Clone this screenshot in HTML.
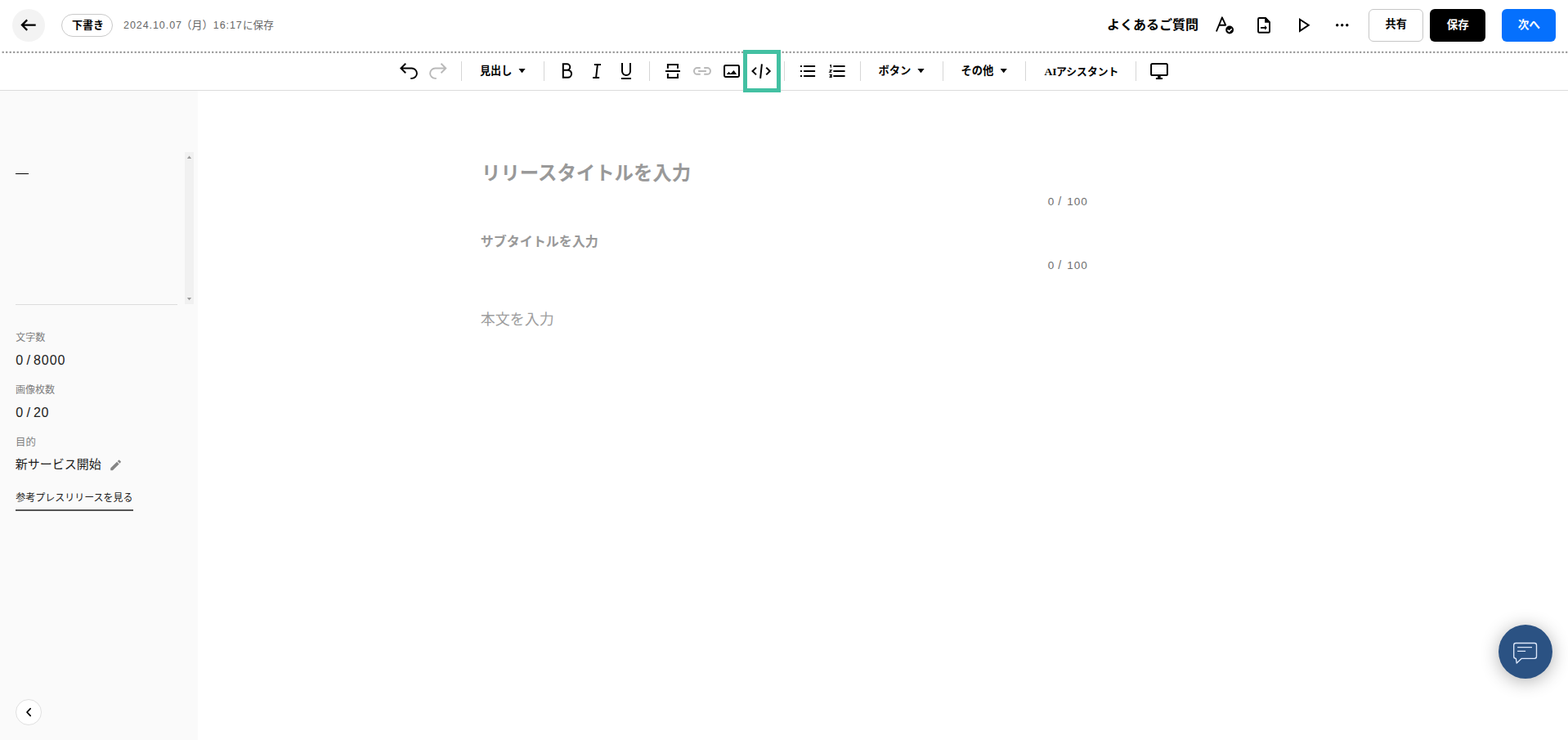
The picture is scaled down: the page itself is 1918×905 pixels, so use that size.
<!DOCTYPE html>
<html lang="ja">
<head>
<meta charset="utf-8">
<title>プレスリリースエディター</title>
<style>
*{box-sizing:border-box;margin:0;padding:0}
html,body{width:1918px;height:905px;overflow:hidden;background:#fff}
body{position:relative;font-family:"Liberation Sans",sans-serif;font-size:13px;color:#000}
.abs,.tx,.ico{position:absolute}
.tx{display:block;line-height:0}
.tx svg,.ico svg{display:block;overflow:visible}
.tx text{font-family:"Liberation Sans","Noto Sans CJK JP",sans-serif}
.ico{left:0;top:0;pointer-events:none}

/* header */
#header{position:absolute;left:0;top:0;width:1918px;height:63px;background:#fff}
.back{position:absolute;left:15px;top:11px;width:40px;height:40px;border-radius:50%;background:#f3f3f3}
.pill{position:absolute;left:75px;top:17px;width:63px;height:28px;border:1px solid #c9c9c9;border-radius:14px;background:#fff}
.btn{position:absolute;top:11px;height:40px;border-radius:6px;border:0;padding:0;margin:0;display:block;font:inherit}
.btn.share{left:1674px;width:67px;background:#fff;border:1px solid #c6c6c6}
.btn.save{left:1749px;width:68px;background:#000}
.btn.next{left:1837px;width:66px;background:#0570fd}
#dots{position:absolute;left:0;top:62px;width:1918px;height:4px}
#dots svg{display:block}

/* toolbar */
#toolbar{position:absolute;left:0;top:65px;width:1918px;height:46px;background:#fff;border-bottom:1px solid #dcdcdc}
.sep{position:absolute;top:10px;width:1px;height:24px;background:#d6d6d6}
#hl{position:absolute;left:909px;top:61px;width:46px;height:52px;border:5px solid #43c0a2;z-index:5}

/* sidebar */
#sidebar{position:absolute;left:0;top:111px;width:242px;height:794px;background:#fafafa}
.sb-track{position:absolute;left:226px;top:75px;width:11px;height:186px;background:#f1f1f1}
.sb-line{position:absolute;left:19px;top:261px;width:198px;height:1px;background:#dcdcdc}
.dash{position:absolute;left:19px;top:101px;width:16px;height:1px;background:#000}
.uline{position:absolute;left:19px;top:512px;width:144px;height:2px;background:#555}
.collapse{padding:0;display:block;position:absolute;left:19px;top:744px;width:32px;height:32px;border-radius:50%;background:#fff;border:1px solid #e0e0e0}

/* main */
#main{position:absolute;left:242px;top:111px;width:1676px;height:794px;background:#fff}
#fab{position:absolute;left:1833px;top:764px;width:66px;height:66px;border-radius:50%;background:#2b5283;box-shadow:0 3px 22px rgba(0,0,0,.31);z-index:6}
</style>
</head>
<body>

<header id="header">
  <a class="back" role="button" aria-label="戻る"></a>
  <span class="pill"></span>
  <span class="tx " style="left:87px;top:22px;width:41px;height:17px"><svg width="41" height="17" viewBox="0 0 41 17"><text x="1" y="13" font-size="13" font-weight="700" fill="#000">下書き</text></svg></span>
  <span class="tx " style="left:150px;top:24px;width:74px;height:13px"><svg width="74" height="13" viewBox="0 0 74 13"><text x="1" y="10.7" font-size="12.5" fill="#666" textLength="71" lengthAdjust="spacing">2024.10.07</text></svg></span><span class="tx " style="left:228px;top:22px;width:26px;height:17px"><svg width="26" height="17" viewBox="0 0 26 17"><text x="-6.5" y="12.9" font-size="13" fill="#666">（月）</text></svg></span><span class="tx " style="left:260px;top:24px;width:38px;height:13px"><svg width="38" height="13" viewBox="0 0 38 13"><text x="0.8" y="10.7" font-size="12.5" fill="#666" textLength="35" lengthAdjust="spacing">16:17</text></svg></span><span class="tx " style="left:297px;top:23px;width:39px;height:16px"><svg width="39" height="16" viewBox="0 0 39 16"><text x="0" y="12.1" font-size="12.6" fill="#666">に保存</text></svg></span>
  <span class="tx " style="left:1354px;top:21px;width:114px;height:19px"><svg width="114" height="19" viewBox="0 0 114 19"><text x="0" y="14.5" font-size="16" font-weight="700" fill="#000">よくあるご質問</text></svg></span>
  <button type="button" class="btn share" aria-label="共有"></button>
  <button type="button" class="btn save" aria-label="保存"></button>
  <button type="button" class="btn next" aria-label="次へ"></button>
  <span class="tx " style="left:1694px;top:22px;width:29px;height:16px"><svg width="29" height="16" viewBox="0 0 29 16"><text x="0.5" y="11.9" font-size="13.2" font-weight="700" fill="#000">共有</text></svg></span>
  <span class="tx " style="left:1768px;top:23px;width:31px;height:16px"><svg width="31" height="16" viewBox="0 0 31 16"><text x="1.7" y="11.9" font-size="13.5" font-weight="700" fill="#fff">保存</text></svg></span>
  <span class="tx " style="left:1856px;top:22px;width:30px;height:17px"><svg width="30" height="17" viewBox="0 0 30 17"><text x="0.7" y="12.9" font-size="13.6" font-weight="700" fill="#fff">次へ</text></svg></span>
  <div class="ico"><svg width="1918" height="63" viewBox="0 0 1918 63" fill="none" stroke="#000" stroke-width="2">
    <!-- back arrow -->
    <path d="M33.2 24.4 L26.9 30.6 L33.2 36.9 M26.9 30.6 H43.7" stroke-width="2.2"/>
    <!-- spell check A -->
    <path d="M1487.9 38.5 L1494.9 21.3 L1499.2 30.7 H1491.1" stroke-width="1.9" stroke-linejoin="round"/>
    <circle cx="1504.1" cy="36.5" r="4.9" fill="#000" stroke="none"/>
    <path d="M1501.5 36.5 L1503.5 38.4 L1506.8 35.2" stroke="#fff" stroke-width="1.5"/>
    <!-- file export -->
    <path d="M1548 22.05 H1540.3 a1.25 1.25 0 0 0 -1.25 1.25 V38.5 a1.25 1.25 0 0 0 1.25 1.25 H1551.75 a1.25 1.25 0 0 0 1.25 -1.25 V27.4 Z" stroke-width="1.9" stroke-linejoin="round"/>
    <path d="M1547.1 21.3 H1548.6 L1553.9 27 V27.8 H1547.1 Z" fill="#000" stroke="none"/>
    <path d="M1542.05 33.95 H1548" stroke-width="1.9"/>
    <path d="M1547.2 31.1 L1549.9 33.95 L1547.2 36.8 Z" fill="#000" stroke="none"/>
    <!-- play -->
    <path d="M1590 23.75 L1600.7 30.75 L1590 37.8 Z"/>
    <!-- dots -->
    <g fill="#000" stroke="none"><circle cx="1635.7" cy="30.7" r="1.7"/><circle cx="1641.7" cy="30.7" r="1.7"/><circle cx="1647.8" cy="30.7" r="1.7"/></g>
  </svg></div>
</header>

<div id="dots"><svg width="1918" height="4" viewBox="0 0 1918 4"><line x1="2.6" y1="1.95" x2="1918" y2="1.95" stroke="#9b9b9b" stroke-width="2.2" stroke-dasharray="2.2 2.3"/></svg></div>
<div id="hl"></div>

<nav id="toolbar">
  <div class="sep" style="left:564px"></div>
  <div class="sep" style="left:665px"></div>
  <div class="sep" style="left:794px"></div>
  <div class="sep" style="left:959px"></div>
  <div class="sep" style="left:1052px"></div>
  <div class="sep" style="left:1153px"></div>
  <div class="sep" style="left:1254px"></div>
  <div class="sep" style="left:1389px"></div>
  <span class="tx " style="left:586px;top:13px;width:42px;height:17px"><svg width="42" height="17" viewBox="0 0 42 17"><text x="1" y="12.9" font-size="13.1" font-weight="700" fill="#000">見出し</text></svg></span>
  <span class="tx " style="left:1074px;top:13px;width:42px;height:17px"><svg width="42" height="17" viewBox="0 0 42 17"><text x="0.5" y="13.3" font-size="13.3" font-weight="700" fill="#000">ボタン</text></svg></span>
  <span class="tx " style="left:1175px;top:13px;width:43px;height:17px"><svg width="43" height="17" viewBox="0 0 43 17"><text x="0.5" y="13" font-size="13.3" font-weight="700" fill="#000">その他</text></svg></span>
  <span class="tx " style="left:1276px;top:16px;width:19px;height:13px"><svg width="19" height="13" viewBox="0 0 19 13"><text x="1.4" y="10.7" font-size="13.5" font-weight="700" fill="#000" style="font-family:'Liberation Serif','Noto Serif CJK SC',serif" textLength="15" lengthAdjust="spacing">AI</text></svg></span><span class="tx " style="left:1292px;top:14px;width:77px;height:17px"><svg width="77" height="17" viewBox="0 0 77 17"><text x="0" y="13.3" font-size="12.8" font-weight="700" fill="#000">アシスタント</text></svg></span>
  <div class="ico"><svg width="1918" height="46" viewBox="0 65 1918 46" fill="none" stroke="#000" stroke-width="2">
    <!-- undo -->
    <path d="M496.2 77.8 L490.4 83.5 L496.2 89.2 M490.4 83.5 H503.75 A6.17 6.17 0 0 1 503.75 95.85 H502.2" stroke-width="1.9"/>
    <!-- redo -->
    <path d="M539.5 77.8 L545.3 83.5 L539.5 89.2 M545.3 83.5 H532.3 A6.17 6.17 0 0 0 532.3 95.85 H533.8" stroke="#b9b9b9" stroke-width="1.9"/>
    <!-- carets -->
    <g fill="#000" stroke="none">
      <path d="M634.5 84.1 H642.6 L638.55 89.3 Z"/>
      <path d="M1122.4 84.1 H1130.6 L1126.5 89.3 Z"/>
      <path d="M1223.6 84.1 H1231.8 L1227.7 89.3 Z"/>
    </g>
    <!-- B -->
    <path d="M688.8 78.3 V94.8 H694.5 A4.575 4.575 0 0 0 694.5 85.65 H688.8 M693.6 85.65 A3.675 3.675 0 0 0 693.6 78.3 H688.8 V79"/>
    <!-- I -->
    <path d="M726.9 79 H735 M725.1 94.9 H733.1 M730.9 79 L729.1 94.9"/>
    <!-- U -->
    <path d="M761 77 V86.9 A5 5 0 0 0 771 86.9 V77 M760 95.9 H772"/>
    <!-- page break -->
    <path d="M816.9 83.8 V78.9 H829 V83.8 M814 86.95 H832 M816.9 90.1 V94.9 H829 V90.1"/>
    <!-- link -->
    <path d="M856.75 83.1 H852.85 a3.85 3.85 0 0 0 0 7.7 H856.75 M861.2 83.1 H865.1 a3.85 3.85 0 0 1 0 7.7 H861.2 M854.15 86.95 H863.9" stroke="#b9b9b9"/>
    <!-- image -->
    <rect x="886.05" y="80.1" width="17.95" height="13.8" rx="1.4"/>
    <path d="M888.8 90.9 L891.4 87.7 L893.8 89.9 L897.6 85.9 L901.1 90.9 Z" fill="#000" stroke="none"/>
    <!-- code -->
    <path d="M925 82.6 L920.5 87 L925 91.4 M931.9 78.3 L930.1 95.8 M937.3 82.6 L941.7 87 L937.3 91.4"/>
    <!-- bullets -->
    <path d="M983.1 81 H997.1 M983.1 87 H997.1 M983.1 93 H997.1 M979 81 H981 M979 87 H981 M979 93 H981"/>
    <!-- numbered -->
    <path d="M1020.1 81 H1032.8 M1020.1 87 H1032.8 M1020.1 93 H1032.8" stroke-linecap="round"/>
    <g stroke-width="1.15"><path d="M1015 80.3 L1016.4 79.6 V82.7"/><path d="M1014.6 85.7 H1017.1 L1014.8 88.2 H1017.4"/><path d="M1014.6 91.4 H1017.1 L1015.9 92.8 H1017.1 V94.4 H1014.5"/></g>
    <!-- monitor -->
    <rect x="1408.1" y="77.95" width="19.8" height="14.05" rx="1.6"/>
    <path d="M1417.9 92.8 V95.3" stroke-width="3.6"/><path d="M1413.9 96.05 H1422"/>
  </svg></div>
</nav>

<aside id="sidebar">
  <div class="dash"></div>
  <div class="sb-track"></div>
  <div class="sb-line"></div>
  <span class="tx " style="left:18px;top:294px;width:39px;height:15px"><svg width="39" height="15" viewBox="0 0 39 15"><text x="1.3" y="11.85" font-size="12" fill="#7f7f7f">文字数</text></svg></span>
  <span class="tx " style="left:18px;top:321px;width:12px;height:17px"><svg width="12" height="17" viewBox="0 0 12 17"><text x="1.3" y="13.9" font-size="16" fill="#1c1c1c">0</text></svg></span><span class="tx " style="left:30px;top:320px;width:11px;height:19px"><svg width="11" height="19" viewBox="0 0 11 19"><text x="2.5" y="15.2" font-size="16.5" fill="#1c1c1c">/</text></svg></span><span class="tx " style="left:40px;top:321px;width:42px;height:17px"><svg width="42" height="17" viewBox="0 0 42 17"><text x="1" y="13.9" font-size="16" fill="#1c1c1c" textLength="38.5" lengthAdjust="spacing">8000</text></svg></span>
  <span class="tx " style="left:18px;top:358px;width:51px;height:15px"><svg width="51" height="15" viewBox="0 0 51 15"><text x="1.1" y="11.9" font-size="12" fill="#7f7f7f">画像枚数</text></svg></span>
  <span class="tx " style="left:18px;top:385px;width:12px;height:17px"><svg width="12" height="17" viewBox="0 0 12 17"><text x="1.3" y="13.8" font-size="16" fill="#1c1c1c">0</text></svg></span><span class="tx " style="left:30px;top:384px;width:11px;height:19px"><svg width="11" height="19" viewBox="0 0 11 19"><text x="2.5" y="15.1" font-size="16.5" fill="#1c1c1c">/</text></svg></span><span class="tx " style="left:40px;top:385px;width:22px;height:17px"><svg width="22" height="17" viewBox="0 0 22 17"><text x="1" y="13.8" font-size="16" fill="#1c1c1c" textLength="18.5" lengthAdjust="spacing">20</text></svg></span>
  <span class="tx " style="left:19px;top:423px;width:26px;height:14px"><svg width="26" height="14" viewBox="0 0 26 14"><text x="0" y="11" font-size="12.4" fill="#7f7f7f">目的</text></svg></span>
  <span class="tx " style="left:18px;top:447px;width:108px;height:19px"><svg width="108" height="19" viewBox="0 0 108 19"><text x="0.7" y="14.9" font-size="15" fill="#1c1c1c">新サービス開始</text></svg></span>
  <span class="tx " style="left:18px;top:490px;width:147px;height:16px"><svg width="147" height="16" viewBox="0 0 147 16"><text x="1.2" y="12.2" font-size="12" fill="#1c1c1c">参考プレスリリースを見る</text></svg></span>
  <div class="uline"></div>
  <button type="button" class="collapse" aria-label="サイドバーを閉じる"></button>
  <div class="ico"><svg width="242" height="794" viewBox="0 111 242 794" fill="none">
    <path d="M228.9 193.9 H234.1 L231.5 190.6 Z M228.9 363.9 H234.1 L231.5 367.2 Z" fill="#9a9a9a"/>
    <!-- pencil -->
    <path transform="translate(133.08 560.37) scale(0.7083)" fill="#858585" d="M3 17.25V21h3.75L17.81 9.94l-3.75-3.75L3 17.25zM20.71 7.04c.39-.39.39-1.02 0-1.41l-2.34-2.34c-.39-.39-1.02-.39-1.41 0l-1.83 1.83 3.75 3.75 1.83-1.83z"/>
    <!-- chevron -->
    <path d="M37.2 866.6 L33 871 L37.2 875.4" stroke="#000" stroke-width="1.7" stroke-linecap="round" stroke-linejoin="round"/>
  </svg></div>
</aside>

<main id="main">
  <h1 class="tx " style="left:348px;top:88px;width:256px;height:25px"><svg width="256" height="25" viewBox="0 0 256 25"><text x="-1" y="20.8" font-size="23.4" font-weight="700" fill="#999">リリースタイトルを入力</text></svg></h1>
  <span class="tx " style="left:1038px;top:128px;width:12px;height:15px"><svg width="12" height="15" viewBox="0 0 12 15"><text x="1.8" y="11.8" font-size="13.5" fill="#6e6e6e">0</text></svg></span><span class="tx " style="left:1050px;top:127px;width:10px;height:17px"><svg width="10" height="17" viewBox="0 0 10 17"><text x="2.2" y="13.4" font-size="14" fill="#6e6e6e">/</text></svg></span><span class="tx " style="left:1062px;top:128px;width:28px;height:15px"><svg width="28" height="15" viewBox="0 0 28 15"><text x="1.2" y="11.8" font-size="13.5" fill="#6e6e6e" textLength="24.5" lengthAdjust="spacing">100</text></svg></span>
  <h2 class="tx " style="left:345px;top:175px;width:146px;height:19px"><svg width="146" height="19" viewBox="0 0 146 19"><text x="0.75" y="14.6" font-size="16" font-weight="700" fill="#999">サブタイトルを入力</text></svg></h2>
  <span class="tx " style="left:1038px;top:206px;width:12px;height:15px"><svg width="12" height="15" viewBox="0 0 12 15"><text x="1.8" y="11.8" font-size="13.5" fill="#6e6e6e">0</text></svg></span><span class="tx " style="left:1050px;top:205px;width:10px;height:17px"><svg width="10" height="17" viewBox="0 0 10 17"><text x="2.2" y="13.4" font-size="14" fill="#6e6e6e">/</text></svg></span><span class="tx " style="left:1062px;top:206px;width:28px;height:15px"><svg width="28" height="15" viewBox="0 0 28 15"><text x="1.2" y="11.8" font-size="13.5" fill="#6e6e6e" textLength="24.5" lengthAdjust="spacing">100</text></svg></span>
  <p class="tx " style="left:345px;top:270px;width:91px;height:20px"><svg width="91" height="20" viewBox="0 0 91 20"><text x="0.7" y="15.6" font-size="18" fill="#9e9e9e">本文を入力</text></svg></p>
</main>

<div id="fab" role="button" aria-label="チャット">
  <svg width="66" height="66" viewBox="1833 764 66 66" fill="none" stroke="#dee8fa" stroke-width="1.35">
    <path d="M1854.2 786.5 H1877 a2.5 2.5 0 0 1 2.5 2.5 V802.8 a2.5 2.5 0 0 1 -2.5 2.5 H1861.3 L1855.2 811 L1854.4 805.3 H1854.2 a2.5 2.5 0 0 1 -2.5 -2.5 V789 a2.5 2.5 0 0 1 2.5 -2.5 Z" stroke-linejoin="round"/>
    <path d="M1856.1 791.6 H1874 M1856.1 796.4 H1866.1" stroke-width="1.4"/>
  </svg>
</div>

</body>
</html>
